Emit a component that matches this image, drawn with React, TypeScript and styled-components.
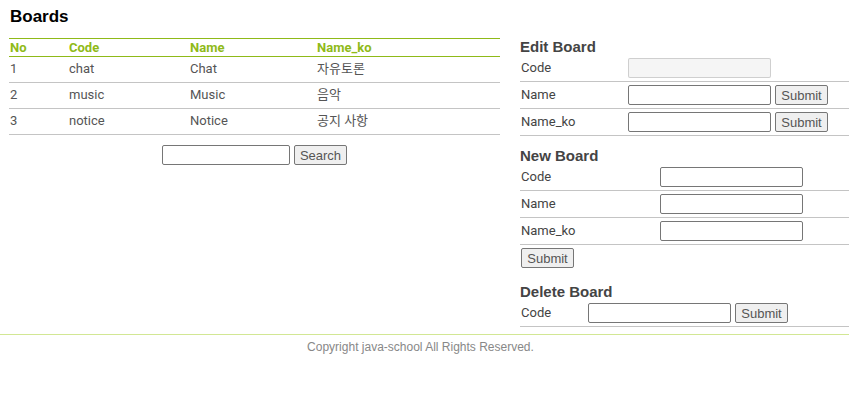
import React from "react";
import styled, { createGlobalStyle } from "styled-components";

const Global = createGlobalStyle`
  html, body { margin: 0; padding: 0; background: #fff; }
  body { font-family: "Liberation Sans", Arial, sans-serif; }
`;

const Page = styled.div`
  width: 849px;
  display: flex;
  flex-direction: column;
`;

const Main = styled.div`
  display: flex;
  align-items: flex-start;
  padding: 0 0 0 9px;
  gap: 20px;
`;

const Left = styled.div`
  width: 491px;
  display: flex;
  flex-direction: column;
`;

const Title = styled.h1`
  margin: 7px 0 0 1px;
  font: bold 17px/20px "Liberation Sans", Arial, sans-serif;
  color: #000;
  height: 31px;
`;

const Table = styled.table`
  width: 100%;
  border-collapse: collapse;
  border-top: 1px solid #8fba18;
  font-family: Roboto, "Noto Sans CJK KR", sans-serif;
`;

const Th = styled.th<{ $w?: number }>`
  text-align: left;
  font: bold 13px/17px Roboto, sans-serif;
  color: #8fba18;
  padding: 0 0 0 1px;
  width: ${(p) => (p.$w ? `${p.$w}px` : "auto")};
  border-bottom: 1px solid #8fba18;
  height: 17px;
`;

const Td = styled.td`
  font: 13px/16px Roboto, "Noto Sans CJK KR", sans-serif;
  color: #555;
  padding: 0 0 1px 1px;
  height: 24px;
  border-bottom: 1px solid #c4c4c4;
`;

const SearchRow = styled.div`
  display: flex;
  justify-content: center;
  gap: 4px;
  margin-top: 10px;
`;

const Input = styled.input<{ $w?: number }>`
  box-sizing: border-box;
  width: ${(p) => p.$w ?? 143}px;
  height: 20px;
  border: 1px solid #767676;
  border-radius: 2px;
  padding: 1px 2px;
  margin: 0;
  background: #fff;
  &:disabled {
    background: #f5f5f5;
    border-color: rgba(118, 118, 118, 0.3);
  }
`;

const Button = styled.button`
  box-sizing: border-box;
  height: 20px;
  width: 53px;
  margin: 0;
  padding: 0;
  font: 13px "Liberation Sans", Arial, sans-serif;
  color: #555;
  background: #efefef;
  border: 1px solid #767676;
  border-radius: 2px;
`;

const Right = styled.div`
  width: 329px;
  display: flex;
  flex-direction: column;
`;

const SectionTitle = styled.h2<{ $top: number }>`
  margin: ${(p) => p.$top}px 0 0 0;
  font: bold 15px/17px "Liberation Sans", Arial, sans-serif;
  color: #444;
`;

const Form = styled.div`
  display: flex;
  flex-direction: column;
`;

const FormRow = styled.div<{ $label: number }>`
  display: grid;
  grid-template-columns: ${(p) => p.$label}px auto auto 1fr;
  align-items: center;
  column-gap: 4px;
  height: 26px;
  border-bottom: 1px solid #c4c4c4;
  & > :first-child { margin-left: 1px; }
`;

const Label = styled.span`
  font: 13px/16px Roboto, sans-serif;
  color: #444;
`;

const ButtonRow = styled.div`
  display: flex;
  padding: 3px 0 0 1px;
`;

const Footer = styled.footer`
  margin-top: 7px;
  border-top: 1px solid #d2e794;
  text-align: center;
  font: 12px/14px "Liberation Sans", Arial, sans-serif;
  color: #888;
  padding: 5px 8px 0 0;
`;

const rows = [
  ["1", "chat", "Chat", "자유토론"],
  ["2", "music", "Music", "음악"],
  ["3", "notice", "Notice", "공지 사항"],
];

export default function App() {
  return (
    <Page>
      <Global />
      <Main>
        <Left>
          <Title>Boards</Title>
          <Table>
            <thead>
              <tr>
                <Th $w={58}>No</Th>
                <Th $w={120}>Code</Th>
                <Th $w={126}>Name</Th>
                <Th>Name_ko</Th>
              </tr>
            </thead>
            <tbody>
              {rows.map((r) => (
                <tr key={r[0]}>
                  {r.map((c, i) => (
                    <Td key={i}>{c}</Td>
                  ))}
                </tr>
              ))}
            </tbody>
          </Table>
          <SearchRow>
            <Input $w={128} />
            <Button>Search</Button>
          </SearchRow>
        </Left>
        <Right>
          <SectionTitle $top={38}>Edit Board</SectionTitle>
          <Form>
            <FormRow $label={104}>
              <Label>Code</Label>
              <Input disabled />
            </FormRow>
            <FormRow $label={104}>
              <Label>Name</Label>
              <Input />
              <Button>Submit</Button>
            </FormRow>
            <FormRow $label={104}>
              <Label>Name_ko</Label>
              <Input />
              <Button>Submit</Button>
            </FormRow>
          </Form>
          <SectionTitle $top={11}>New Board</SectionTitle>
          <Form>
            <FormRow $label={136}>
              <Label>Code</Label>
              <Input />
            </FormRow>
            <FormRow $label={136}>
              <Label>Name</Label>
              <Input />
            </FormRow>
            <FormRow $label={136}>
              <Label>Name_ko</Label>
              <Input />
            </FormRow>
          </Form>
          <ButtonRow>
            <Button>Submit</Button>
          </ButtonRow>
          <SectionTitle $top={15}>Delete Board</SectionTitle>
          <Form>
            <FormRow $label={64}>
              <Label>Code</Label>
              <Input />
              <Button>Submit</Button>
            </FormRow>
          </Form>
        </Right>
      </Main>
      <Footer>Copyright java-school All Rights Reserved.</Footer>
    </Page>
  );
}
